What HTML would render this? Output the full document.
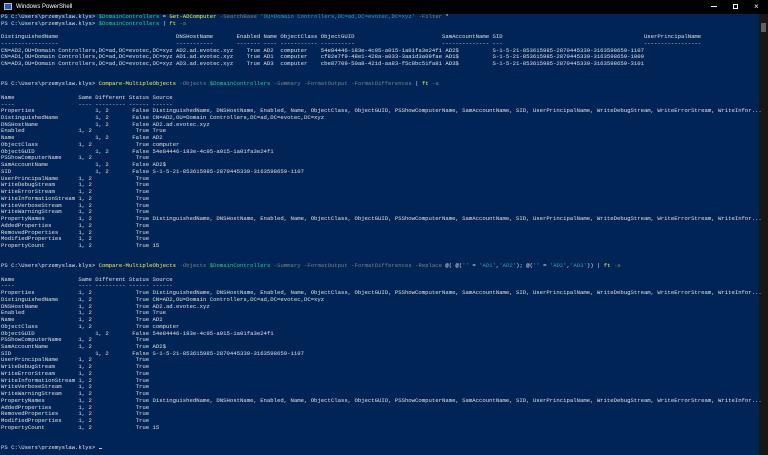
<!DOCTYPE html>
<html><head><meta charset="utf-8"><style>
html,body{margin:0;padding:0;width:768px;height:455px;overflow:hidden;background:#012456}
#tb{position:absolute;left:0;top:0;width:768px;height:14px;background:#000;color:#fff;font:6px "Liberation Sans",sans-serif}
#tb .t{position:absolute;left:16px;top:3.5px}
#tb .ic{position:absolute;left:4px;top:3px;width:8px;height:7px;background:#2a5ea8;border:0.5px solid #9ec1ef;box-sizing:border-box}
#sb{position:absolute;left:759px;top:14px;width:9px;height:441px;background:#171717}
#th{position:absolute;left:761px;top:23px;width:5px;height:9px;background:#606060}
pre{position:absolute;left:1px;top:14px;margin:0;font-family:"Liberation Mono",monospace;font-size:5.62px;line-height:6.73px;color:#e2e2e2;white-space:pre}
.y{color:#f5f543}.g{color:#23d18b}.p{color:#808080}.s{color:#2aa1b3}.w{color:#e8e8e8}
.cur{display:inline-block;width:3px;height:1px;background:#f0c674;vertical-align:baseline}
</style></head><body>
<div id="tb"><div class="ic"></div><span class="t">Windows PowerShell</span>
<span style="position:absolute;left:711px;top:6px;width:6px;height:0.7px;background:#fff"></span>
<span style="position:absolute;left:733px;top:4px;width:5px;height:5px;border:0.7px solid #fff;box-sizing:border-box"></span>
<span style="position:absolute;left:754px;top:1.5px;font-size:8px">×</span></div>
<div id="sb"></div><div id="th"></div>
<pre>PS C:\Users\przemyslaw.klys&gt; <span class="g">$DomainControllers</span> = <span class="y">Get-ADComputer</span> <span class="p">-SearchBase</span> <span class="s">'OU=Domain Controllers,DC=ad,DC=evotec,DC=xyz'</span> <span class="p">-Filter</span> *
PS C:\Users\przemyslaw.klys&gt; <span class="g">$DomainControllers</span> | <span class="y">ft</span> <span class="p">-a</span>

DistinguishedName                                   DNSHostName       Enabled Name ObjectClass ObjectGUID                          SamAccountName SID                                          UserPrincipalName
-----------------                                   -----------       ------- ---- ----------- ----------                          -------------- ---                                          -----------------
CN=AD2,OU=Domain Controllers,DC=ad,DC=evotec,DC=xyz AD2.ad.evotec.xyz    True AD2  computer    54e84446-183e-4c95-a015-1a01fa3e24f1 AD2$          S-1-5-21-853615985-2870445339-3163598659-1107
CN=AD1,OU=Domain Controllers,DC=ad,DC=evotec,DC=xyz AD1.ad.evotec.xyz    True AD1  computer    cf82e7f9-48e1-428a-a033-3aa1d3a09fae AD1$          S-1-5-21-853615985-2870445339-3163598659-1000
CN=AD3,OU=Domain Controllers,DC=ad,DC=evotec,DC=xyz AD3.ad.evotec.xyz    True AD3  computer    cbe87709-50a8-421d-aa83-f5c8bc51fa81 AD3$          S-1-5-21-853615985-2870445339-3163598659-3101


PS C:\Users\przemyslaw.klys&gt; <span class="y">Compare-MultipleObjects</span> <span class="p">-Objects</span> <span class="g">$DomainControllers</span> <span class="p">-Summary -FormatOutput -FormatDifferences</span> | <span class="y">ft</span> <span class="p">-a</span>

Name                   Same Different Status Source
----                   ---- --------- ------ ------
Properties                  1, 2       False DistinguishedName, DNSHostName, Enabled, Name, ObjectClass, ObjectGUID, PSShowComputerName, SamAccountName, SID, UserPrincipalName, WriteDebugStream, WriteErrorStream, WriteInfor...
DistinguishedName           1, 2       False CN=AD2,OU=Domain Controllers,DC=ad,DC=evotec,DC=xyz
DNSHostName                 1, 2       False AD2.ad.evotec.xyz
Enabled                1, 2             True True
Name                        1, 2       False AD2
ObjectClass            1, 2             True computer
ObjectGUID                  1, 2       False 54e84446-183e-4c95-a015-1a01fa3e24f1
PSShowComputerName     1, 2             True
SamAccountName              1, 2       False AD2$
SID                         1, 2       False S-1-5-21-853615985-2870445339-3163598659-1107
UserPrincipalName      1, 2             True
WriteDebugStream       1, 2             True
WriteErrorStream       1, 2             True
WriteInformationStream 1, 2             True
WriteVerboseStream     1, 2             True
WriteWarningStream     1, 2             True
PropertyNames          1, 2             True DistinguishedName, DNSHostName, Enabled, Name, ObjectClass, ObjectGUID, PSShowComputerName, SamAccountName, SID, UserPrincipalName, WriteDebugStream, WriteErrorStream, WriteInfor...
AddedProperties        1, 2             True
RemovedProperties      1, 2             True
ModifiedProperties     1, 2             True
PropertyCount          1, 2             True 15


PS C:\Users\przemyslaw.klys&gt; <span class="y">Compare-MultipleObjects</span> <span class="p">-Objects</span> <span class="g">$DomainControllers</span> <span class="p">-Summary -FormatOutput -FormatDifferences -Replace</span> @( @(<span class="s">''</span> = <span class="s">'AD1'</span>,<span class="s">'AD2'</span>); @(<span class="s">''</span> = <span class="s">'AD2'</span>,<span class="s">'AD3'</span>)) | <span class="y">ft</span> <span class="p">-a</span>

Name                   Same Different Status Source
----                   ---- --------- ------ ------
Properties             1, 2             True DistinguishedName, DNSHostName, Enabled, Name, ObjectClass, ObjectGUID, PSShowComputerName, SamAccountName, SID, UserPrincipalName, WriteDebugStream, WriteErrorStream, WriteInfor...
DistinguishedName      1, 2             True CN=AD2,OU=Domain Controllers,DC=ad,DC=evotec,DC=xyz
DNSHostName            1, 2             True AD2.ad.evotec.xyz
Enabled                1, 2             True True
Name                   1, 2             True AD2
ObjectClass            1, 2             True computer
ObjectGUID                  1, 2       False 54e84446-183e-4c95-a015-1a01fa3e24f1
PSShowComputerName     1, 2             True
SamAccountName         1, 2             True AD2$
SID                         1, 2       False S-1-5-21-853615985-2870445339-3163598659-1107
UserPrincipalName      1, 2             True
WriteDebugStream       1, 2             True
WriteErrorStream       1, 2             True
WriteInformationStream 1, 2             True
WriteVerboseStream     1, 2             True
WriteWarningStream     1, 2             True
PropertyNames          1, 2             True DistinguishedName, DNSHostName, Enabled, Name, ObjectClass, ObjectGUID, PSShowComputerName, SamAccountName, SID, UserPrincipalName, WriteDebugStream, WriteErrorStream, WriteInfor...
AddedProperties        1, 2             True
RemovedProperties      1, 2             True
ModifiedProperties     1, 2             True
PropertyCount          1, 2             True 15


PS C:\Users\przemyslaw.klys&gt; <span class="cur"></span></pre>
</body></html>
